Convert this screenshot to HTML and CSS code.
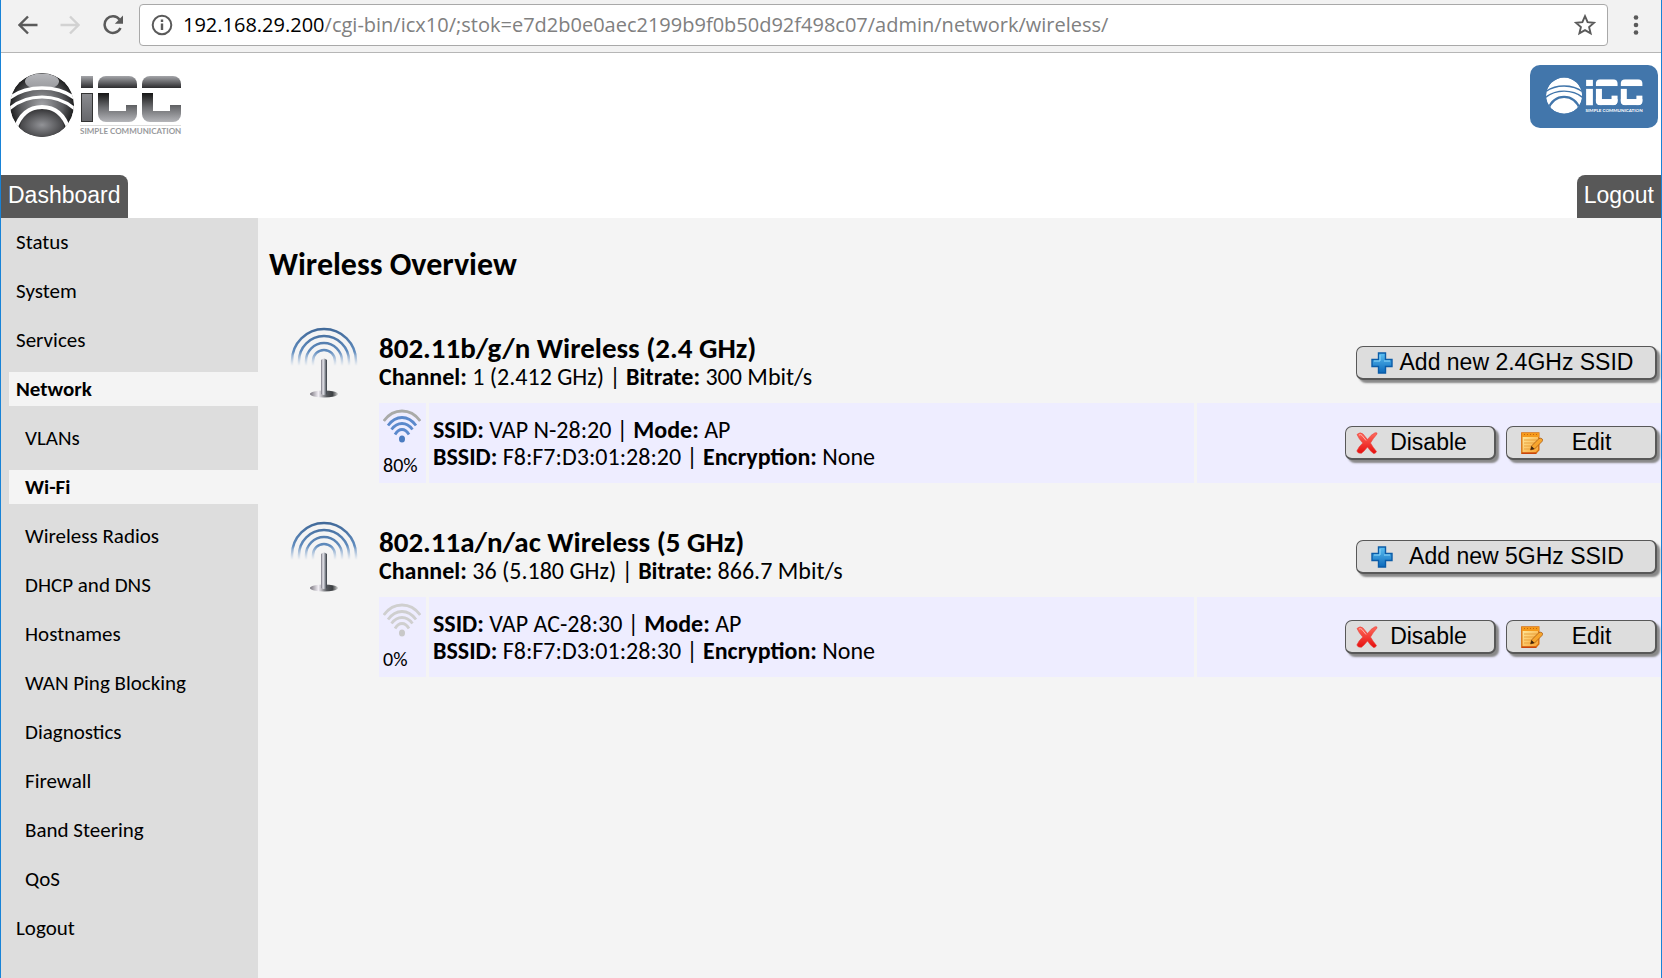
FILE: index.html
```html
<!DOCTYPE html>
<html lang="en">
<head>
<meta charset="utf-8">
<title>Wireless Overview</title>
<link rel="stylesheet" href="styles.css">
</head>
<body>
<svg class="defs" width="0" height="0" aria-hidden="true">
  <defs>
    <linearGradient id="top" x1="0" y1="0" x2="0" y2="1"><stop offset="0" stop-color="#a5a6aa"/><stop offset="1" stop-color="#2c2c2e"/></linearGradient>
    <linearGradient id="low" x1="0" y1="0" x2="0" y2="1"><stop offset="0" stop-color="#151515"/><stop offset=".5" stop-color="#6c6d70"/><stop offset="1" stop-color="#b4b5b9"/></linearGradient>
    <linearGradient id="stem" x1="0" y1="0" x2="0" y2="1"><stop offset="0" stop-color="#8a8b8f"/><stop offset="1" stop-color="#66676b"/></linearGradient>
    <radialGradient id="ball" cx=".5" cy=".5" r=".55"><stop offset="0" stop-color="#a2a3a7"/><stop offset=".6" stop-color="#5a5b5e"/><stop offset="1" stop-color="#0c0c0c"/></radialGradient>
    <linearGradient id="shine" x1="0" y1="0" x2="0" y2="1"><stop offset="0" stop-color="#b5b6ba"/><stop offset="1" stop-color="#98999d"/></linearGradient>
    <radialGradient id="core" cx=".5" cy=".55" r=".6"><stop offset="0" stop-color="#929397"/><stop offset="1" stop-color="#2c2c2e"/></radialGradient>
    <clipPath id="disc"><circle cx="32" cy="33" r="32"/></clipPath>
    <clipPath id="c1"><rect x="88" y="4" width="39" height="46" rx="8"/></clipPath>
    <clipPath id="c2"><rect x="132" y="4" width="39" height="46" rx="8"/></clipPath>
    <linearGradient id="fade" gradientUnits="userSpaceOnUse" x1="0" y1="0" x2="0" y2="41"><stop offset="0" stop-color="#3f6797"/><stop offset=".6" stop-color="#5f8bbd"/><stop offset=".95" stop-color="#8fb0d6" stop-opacity="0"/></linearGradient>
    <linearGradient id="pole" x1="0" y1="0" x2="1" y2="0"><stop offset="0" stop-color="#777580"/><stop offset=".35" stop-color="#e8e8ee"/><stop offset=".6" stop-color="#a5a8b0"/><stop offset="1" stop-color="#30363c"/></linearGradient>
    <linearGradient id="foot" x1="0" y1="0" x2="1" y2="0"><stop offset="0" stop-color="#77737c"/><stop offset=".3" stop-color="#f3f0f6"/><stop offset=".6" stop-color="#55585c"/><stop offset=".8" stop-color="#3c3f42"/><stop offset="1" stop-color="#d5d5d5"/></linearGradient>
    <linearGradient id="blue" x1="0" y1="0" x2="0" y2="1"><stop offset="0" stop-color="#5cc0f2"/><stop offset="1" stop-color="#0c69bb"/></linearGradient>
    <linearGradient id="red" x1="0" y1="0" x2="0" y2="1"><stop offset="0" stop-color="#ff6a5c"/><stop offset="1" stop-color="#e60f0f"/></linearGradient>
    <linearGradient id="pad" x1="0" y1="0" x2="1" y2="1"><stop offset="0" stop-color="#fff0a8"/><stop offset="1" stop-color="#f9a02c"/></linearGradient>
    <symbol id="i-antenna" viewBox="0 0 68 72">
      <g fill="none" stroke="url(#fade)" stroke-width="2.500"><path d="M2 40V34a32 32 0 0 1 64 0v6"/><path d="M9 40V34a25 25 0 0 1 50 0v6"/><path d="M16 40V34a18 18 0 0 1 36 0v6"/><path d="M23 39V34a11 11 0 0 1 22 0v5"/></g>
      <ellipse cx="34" cy="67" rx="14" ry="3.500" fill="url(#foot)"/>
      <path d="M31 33q3-3 6 0v34q-3 2-6 0z" fill="url(#pole)"/>
    </symbol>
    <symbol id="i-plus" viewBox="0 0 22 22"><path d="M7.500 1h7v6.500H21v7h-6.500V21h-7v-6.500H1v-7h6.500z" fill="url(#blue)" stroke="#0b5ca8" stroke-width="1.400"/><path d="M9 3v6H3M13 9h6" fill="none" stroke="#8fd8fa" stroke-width="1"/></symbol>
    <symbol id="i-cross" viewBox="0 0 22 22"><path d="M1 2.500Q4-.5 7 2l4.500 5.500Q15 2.500 19 .8q2.500-.6 2 1.200Q17 6.500 14.500 11q2.500 4.500 6 8.500-1 2.500-3 2-3.500-2.500-6-6.500Q8.500 19 5.500 21.200 2 22 .8 19q2-4.500 6-8Q3 7 1 2.500z" fill="url(#red)" stroke="#e8413a" stroke-width=".6"/><path d="M3 3q2-1 3 .5l4 5" fill="none" stroke="#ffb3aa" stroke-width="1"/></symbol>
    <symbol id="i-edit" viewBox="0 0 22 22"><path d="M.8 1h17v17l-3 3.200H.8z" fill="url(#pad)" stroke="#d9720f" stroke-width="1.400"/><path d="M1 1h17v4H1z" fill="#f59a1b"/><path d="M3 2.500h13" stroke="#c9640c" stroke-dasharray="1 2"/><path d="M3 8h13M3 11h11M3 14h7M3 17h8" stroke="#e9a13c"/><path d="M.8 21.200h14.500" stroke="#c9400c" stroke-width="1.400"/><path d="M9.500 18l1-4L18 6.500q2-1 3.500.8.300 1.200-.5 2.200L13.500 17z" fill="#f7a52d" stroke="#a85a10" stroke-width=".8"/><path d="M9.500 18l1-4 3 3z" fill="#3a2410"/></symbol>
    <symbol id="i-wifi" viewBox="0 0 38 34"><g fill="none" stroke-width="2.800"><path class="wave-outer" d="M.8 12Q8 2 19 2t18.200 10"/><path d="M5 16.500Q11 8.500 19 8.500t14 8"/><path d="M8.500 20.500q4.500-6 10.500-6t10.500 6"/><path d="M12 25.500q3-5 7-5t7 5"/></g><ellipse stroke="none" cx="19" cy="30" rx="3" ry="3.500"/></symbol>
  </defs>
</svg>
<div class="window">
  <div class="toolbar">
    <button class="nav-btn" aria-label="Back"><svg width="20" height="20" viewBox="0 0 20 20"><path d="M19.500 10H2M10 1.500L1.500 10l8.500 8.500" fill="none" stroke="#5a5a5a" stroke-width="2.400"/></svg></button>
    <button class="nav-btn" aria-label="Forward" disabled><svg width="20" height="20" viewBox="0 0 20 20"><path d="M.5 10H18M10 1.500l8.500 8.500-8.500 8.500" fill="none" stroke="#d2d2d2" stroke-width="2.400"/></svg></button>
    <button class="nav-btn" aria-label="Reload"><svg width="22" height="20" viewBox="0 0 22 20"><path d="M17.500 4.500A8.300 8.300 0 1 0 18.500 13" fill="none" stroke="#5a5a5a" stroke-width="2.500"/><path d="M21 .5v8.200h-8.200z" fill="#5a5a5a"/></svg></button>
    <div class="address">
      <svg width="22" height="22" viewBox="0 0 22 22"><circle cx="11" cy="11" r="9.300" fill="none" stroke="#5a5a5a" stroke-width="2"/><path d="M11 9.500V16M11 5.500v2.500" stroke="#5a5a5a" stroke-width="2.400"/></svg>
      <span class="url">192.168.29.200<span class="path">/cgi-bin/icx10/;stok=e7d2b0e0aec2199b9f0b50d92f498c07/admin/network/wireless/</span></span>
      <button class="nav-btn" aria-label="Bookmark"><svg width="22" height="22" viewBox="0 0 22 22"><path d="M11 2.200l2.600 6 6.400.6-4.900 4.300 1.500 6.300-5.600-3.300-5.600 3.300 1.500-6.300L2 8.800l6.400-.6z" fill="none" stroke="#5a5a5a" stroke-width="1.900"/></svg></button>
    </div>
    <button class="nav-btn" aria-label="Menu"><svg width="6" height="20" viewBox="0 0 6 20" fill="#5a5a5a"><circle cx="3" cy="2.500" r="2.300"/><circle cx="3" cy="10" r="2.300"/><circle cx="3" cy="17.500" r="2.300"/></svg></button>
  </div>

  <header class="banner">
    <div class="logos">
      <svg width="172" height="67" viewBox="0 0 172 67" role="img" aria-label="ICC Simple Communication">
        <g clip-path="url(#disc)">
          <circle cx="32" cy="33" r="32" fill="url(#ball)"/>
          <ellipse cx="32" cy="9.500" rx="17" ry="8" fill="url(#shine)"/>
          <path d="M8 66Q10 37 32 37t24 29z" fill="url(#core)"/>
          <g fill="none" stroke="#fff" stroke-width="3"><path d="M-2 27Q12 16 32 16t34 11" stroke-width="3.500"/><path d="M-2 38Q12 25 32 25t34 13"/><path d="M5 58Q12 35 32 35t27 23" stroke-width="4"/></g>
        </g>
        <rect x="71" y="4" width="12" height="12" fill="url(#top)"/><rect x="71.500" y="21.500" width="11" height="28" fill="url(#stem)" stroke="#333"/>
        <g clip-path="url(#c1)"><rect x="88" y="4" width="39" height="12" fill="url(#top)"/></g>
        <g clip-path="url(#c2)"><rect x="132" y="4" width="39" height="12" fill="url(#top)"/></g>
        <g clip-path="url(#c1)"><rect x="88" y="21" width="39" height="29" fill="url(#low)"/><rect x="99" y="20" width="17" height="19" fill="#fff"/><rect x="112" y="20" width="16" height="13" fill="#fff"/></g>
        <g clip-path="url(#c2)"><rect x="132" y="21" width="39" height="29" fill="url(#low)"/><rect x="143" y="20" width="17" height="19" fill="#fff"/><rect x="156" y="20" width="16" height="13" fill="#fff"/></g>
        <rect x="70" y="53" width="101" height="1" fill="#ddd"/>
        <text x="70" y="62" class="tagline">SIMPLE COMMUNICATION</text>
      </svg>
      <svg class="badge" width="128" height="63" viewBox="0 0 128 63" role="img" aria-label="ICC Simple Communication">
        <g transform="translate(16 12) scale(.565)" fill="#fff">
          <g clip-path="url(#disc)"><circle cx="32" cy="33" r="32"/>
            <g fill="none" stroke="#4276ab" stroke-width="2.500"><path d="M-2 27Q12 16 32 16t34 11"/><path d="M-2 37Q12 25 32 25t34 12"/><path d="M3 58Q12 35 32 35t29 23" stroke-width="4"/></g></g>
          <rect x="71" y="5" width="12" height="11"/><rect x="71" y="21" width="12" height="29"/>
          <g clip-path="url(#c1)"><rect x="88" y="4" width="39" height="12"/><rect x="88" y="21" width="11" height="29"/><rect x="88" y="39" width="39" height="11"/><rect x="116" y="33" width="11" height="17"/></g>
          <g clip-path="url(#c2)"><rect x="132" y="4" width="39" height="12"/><rect x="132" y="21" width="11" height="29"/><rect x="132" y="39" width="39" height="11"/><rect x="160" y="33" width="11" height="17"/></g>
          <text x="70" y="62" class="tagline light">SIMPLE COMMUNICATION</text>
        </g>
      </svg>
    </div>
    <div class="tabs"><a class="tab tab-left" href="#">Dashboard</a><a class="tab tab-right" href="#">Logout</a></div>
  </header>

  <div class="content">
    <nav class="sidebar">
      <a href="#">Status</a>
      <a href="#">System</a>
      <a href="#">Services</a>
      <a href="#" class="active">Network</a>
      <a href="#" class="sub">VLANs</a>
      <a href="#" class="sub active">Wi-Fi</a>
      <a href="#" class="sub">Wireless Radios</a>
      <a href="#" class="sub">DHCP and DNS</a>
      <a href="#" class="sub">Hostnames</a>
      <a href="#" class="sub">WAN Ping Blocking</a>
      <a href="#" class="sub">Diagnostics</a>
      <a href="#" class="sub">Firewall</a>
      <a href="#" class="sub">Band Steering</a>
      <a href="#" class="sub">QoS</a>
      <a href="#">Logout</a>
    </nav>
    <main class="main">
      <h1>Wireless Overview</h1>
      <section class="radio">
        <svg class="antenna" width="68" height="72"><use href="#i-antenna"/></svg>
        <div class="radio-body">
          <div class="radio-head">
            <div><h2>802.11b/g/n Wireless (2.4 GHz)</h2><p class="info"><b>Channel:</b> 1 (2.412 GHz) | <b>Bitrate:</b> 300 Mbit/s</p></div>
            <button class="btn btn-add"><svg width="22" height="22"><use href="#i-plus"/></svg><span>Add new 2.4GHz SSID</span></button>
          </div>
          <div class="network">
            <div class="signal on"><svg width="38" height="34"><use href="#i-wifi"/></svg><span>80%</span></div>
            <div class="details"><p class="info"><b>SSID:</b> VAP N-28:20 | <b>Mode:</b> AP</p><p class="info"><b>BSSID:</b> F8:F7:D3:01:28:20 | <b>Encryption:</b> None</p></div>
            <div class="actions">
              <button class="btn btn-disable"><svg width="22" height="22"><use href="#i-cross"/></svg><span>Disable</span></button>
              <button class="btn"><svg width="22" height="22"><use href="#i-edit"/></svg><span>Edit</span></button>
            </div>
          </div>
        </div>
      </section>
      <section class="radio">
        <svg class="antenna" width="68" height="72"><use href="#i-antenna"/></svg>
        <div class="radio-body">
          <div class="radio-head">
            <div><h2>802.11a/n/ac Wireless (5 GHz)</h2><p class="info"><b>Channel:</b> 36 (5.180 GHz) | <b>Bitrate:</b> 866.7 Mbit/s</p></div>
            <button class="btn btn-add"><svg width="22" height="22"><use href="#i-plus"/></svg><span>Add new 5GHz SSID</span></button>
          </div>
          <div class="network">
            <div class="signal off"><svg width="38" height="34"><use href="#i-wifi"/></svg><span>0%</span></div>
            <div class="details"><p class="info"><b>SSID:</b> VAP AC-28:30 | <b>Mode:</b> AP</p><p class="info"><b>BSSID:</b> F8:F7:D3:01:28:30 | <b>Encryption:</b> None</p></div>
            <div class="actions">
              <button class="btn btn-disable"><svg width="22" height="22"><use href="#i-cross"/></svg><span>Disable</span></button>
              <button class="btn"><svg width="22" height="22"><use href="#i-edit"/></svg><span>Edit</span></button>
            </div>
          </div>
        </div>
      </section>
    </main>
  </div>
</div>
</body>
</html>
```

FILE: styles.css
```css
* { box-sizing: border-box; }
body { margin: 0; font-family: Carlito, Calibri, Lato, sans-serif; color: #000; background: #fff; }
h1, h2, p { margin: 0; }
a { color: inherit; text-decoration: none; }
svg { display: block; flex: none; }
.defs { position: absolute; }
.window { min-height: 100vh; display: flex; flex-direction: column; border: solid #1883d7; border-width: 0 1px; }

.toolbar { display: flex; align-items: center; height: 53px; padding: 0 22px 2px 17px; background: #f2f2f2; border-bottom: 1px solid #b6b6b6; }
.nav-btn { display: block; padding: 0; border: 0; background: none; margin-right: 22px; }
.address { flex: 1; display: flex; align-items: center; height: 42px; margin: 0 25px 0 -7px; padding: 0 11px 0 11px; background: #fff; border: 1px solid #a9a9a9; border-radius: 4px; }
.address .nav-btn, .toolbar > .nav-btn:last-child { margin-right: 0; }
.url { flex: 1; padding-left: 10px; font: 20px/28px "Open Sans", sans-serif; white-space: nowrap; overflow: hidden; }
.path { color: #808080; }

.banner { height: 165px; display: flex; flex-direction: column; justify-content: space-between; }
.logos { display: flex; justify-content: space-between; align-items: flex-start; padding: 12px 3px 0 9px; }
.logos svg:first-child { margin-top: 7px; }
.badge { background: #4276ab; border-radius: 10px; }
.tagline { font: bold 8px Lato, sans-serif; fill: #98999c; }
.tagline.light { fill: #fff; }
.tabs { display: flex; justify-content: space-between; }
.tab { height: 43px; padding: 6px 7px 0; background: #585858; color: #fff; font: 23px/28px "Liberation Sans", Arial, sans-serif; }
.tab-left { border-top-right-radius: 8px; }
.tab-right { border-top-left-radius: 8px; }

.content { flex: 1; display: flex; background: #f4f4f4; }
.sidebar { flex: none; width: 257px; display: flex; flex-direction: column; gap: 15px; padding: 7px 0 0 8px; background: #ddd; }
.sidebar a { height: 34px; padding-left: 7px; font-size: 21px; line-height: 34px; }
.sidebar .sub { padding-left: 16px; }
.sidebar .active { background: #f4f4f4; font-weight: bold; }

.main { flex: 1; min-width: 0; }
h1 { padding: 28px 0 0 11px; font-size: 32px; line-height: 38px; }
.radio { display: flex; padding-left: 32px; margin-top: 38px; }
.radio + .radio { margin-top: 33px; }
.antenna { margin-top: 5px; }
.radio-body { flex: 1; margin-left: 21px; }
.radio-head { height: 81px; display: flex; justify-content: space-between; padding: 11px 4px 0 0; }
h2 { font-size: 29px; line-height: 30px; }
.info { font-size: 24px; line-height: 27px; white-space: nowrap; }
.btn { display: flex; align-items: center; width: 151px; height: 34px; padding: 0 15px 2px 14px; background: #ddd; border: 2px solid #585858; border-width: 1px 2px 2px 1px; border-radius: 7px; box-shadow: 3px 3px 2px #888; color: #000; font: 23px/28px "Liberation Sans", Arial, sans-serif; }
.btn svg { margin-top: 2px; }
.btn span { flex: 1; text-align: center; white-space: nowrap; }
.btn-add { width: 301px; margin-top: 13px; }
.btn-disable { padding-left: 10px; }
.network { display: flex; gap: 3px; height: 80px; }
.network > div { background: #eeedff; }
.signal { width: 47px; padding: 6px 4px 0; font-size: 20px; }
.signal span { display: block; margin-top: 11px; line-height: 22px; }
.on svg { stroke: #5b89cc; fill: #4a7cc0; }
.off svg { stroke: #cfcfcf; fill: #c8c8c8; }
.wave-outer { stroke: var(--outer); }
.on { --outer: #a9aaa8; }
.off { --outer: #cfcfcf; }
.details { flex: 1; padding: 13px 4px 0; }
.actions { width: 464px; display: flex; justify-content: flex-end; align-items: center; gap: 10px; padding: 0 4px; }
```
